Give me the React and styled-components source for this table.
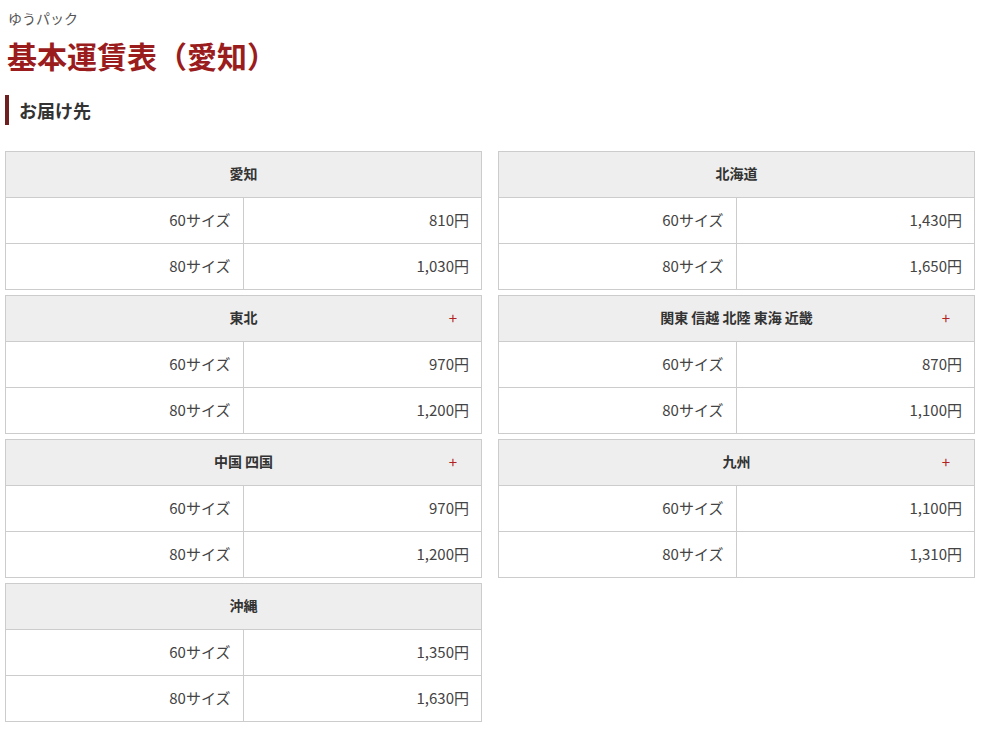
import styled, { createGlobalStyle } from "styled-components";

const GlobalStyle = createGlobalStyle`
  body {
    margin: 0;
    background: #fff;
    font-family: "Noto Sans CJK JP", "Noto Sans", sans-serif;
    color: #333;
  }
`;

const areas = [
  { name: "愛知", rows: [["60サイズ", "810円"], ["80サイズ", "1,030円"]] },
  { name: "北海道", rows: [["60サイズ", "1,430円"], ["80サイズ", "1,650円"]] },
  { name: "東北", plus: true, rows: [["60サイズ", "970円"], ["80サイズ", "1,200円"]] },
  { name: "関東 信越 北陸 東海 近畿", plus: true, rows: [["60サイズ", "870円"], ["80サイズ", "1,100円"]] },
  { name: "中国 四国", plus: true, rows: [["60サイズ", "970円"], ["80サイズ", "1,200円"]] },
  { name: "九州", plus: true, rows: [["60サイズ", "1,100円"], ["80サイズ", "1,310円"]] },
  { name: "沖縄", rows: [["60サイズ", "1,350円"], ["80サイズ", "1,630円"]] },
];

export default function App() {
  return (
    <>
      <GlobalStyle />
      <Page>
        <Label>ゆうパック</Label>
        <Title>基本運賃表（愛知）</Title>
        <SubTitle>お届け先</SubTitle>
        <Grid>
          {areas.map((a) => (
            <FareTable key={a.name}>
              <Head>
                <span />
                <HeadName>{a.name}</HeadName>
                <Plus>{a.plus ? "+" : ""}</Plus>
              </Head>
              {a.rows.map(([size, price]) => (
                <Row key={size}>
                  <Cell>{size}</Cell>
                  <Cell $last>{price}</Cell>
                </Row>
              ))}
            </FareTable>
          ))}
        </Grid>
      </Page>
    </>
  );
}

const Page = styled.div`
  width: 970px;
  padding: 9px 0 0 5px;
`;

const Label = styled.div`
  font-size: 14px;
  line-height: 18px;
  color: #555;
  padding-left: 3px;
`;

const Title = styled.h1`
  margin: 10px 0 0;
  padding-left: 2px;
  font-size: 30px;
  line-height: 36px;
  font-weight: bold;
  color: #9a1c1c;
`;

const SubTitle = styled.h2`
  margin: 22px 0 0;
  border-left: 4px solid #6e1f1f;
  padding-left: 10px;
  font-size: 18px;
  line-height: 30px;
  font-weight: bold;
  color: #333;
`;

const Grid = styled.div`
  display: grid;
  grid-template-columns: 1fr 1fr;
  column-gap: 16px;
  row-gap: 5px;
  margin-top: 26px;
  align-items: start;
`;

const FareTable = styled.div`
  border: 1px solid #ccc;
  border-bottom: none;
`;

const Head = styled.div`
  display: grid;
  grid-template-columns: 60px 1fr 60px;
  align-items: center;
  height: 46px;
  padding-bottom: 3px;
  box-sizing: border-box;
  background: #eee;
  border-bottom: 1px solid #ccc;
`;

const HeadName = styled.div`
  text-align: center;
  font-size: 14px;
  font-weight: bold;
  color: #333;
`;

const Plus = styled.div`
  text-align: center;
  padding-left: 4px;
  font-size: 15px;
  color: #b22222;
`;

const Row = styled.div`
  display: grid;
  grid-template-columns: 1fr 1fr;
  height: 46px;
  box-sizing: border-box;
  border-bottom: 1px solid #ccc;
`;

const Cell = styled.div`
  display: flex;
  align-items: center;
  justify-content: flex-end;
  padding: 0 12px 3px 0;
  font-size: 15px;
  color: #444;
  border-right: ${(p) => (p.$last ? "none" : "1px solid #ccc")};
`;
